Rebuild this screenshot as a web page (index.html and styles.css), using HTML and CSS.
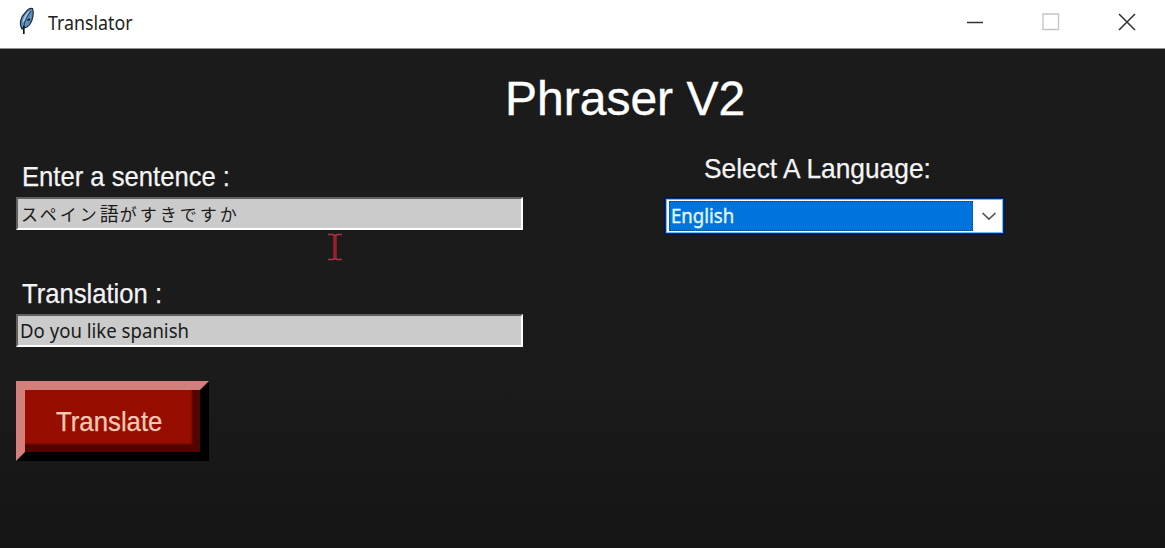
FILE: index.html
```
<!DOCTYPE html>
<html lang="en">
<head>
<meta charset="utf-8">
<title>Translator</title>
<link rel="stylesheet" href="styles.css">
</head>
<body>
<header class="titlebar">
  <svg class="feather" width="20" height="30" viewBox="0 0 20 30">
    <path d="M5 22C2 17 3.500 10 8 6C10 3 13 1 15.500 1.500C17 5 16 13 13 17C11 20 8 21 6 21Z" fill="#5f8fbe" stroke="#1b2a3c" stroke-width="1.200"/>
    <path d="M5.500 16C6 11 9 6 13 3.500C11 8 9 13 5.500 16Z" fill="#a3c8e8"/>
    <path d="M14 4C10 9 7.500 14 6.800 20" fill="none" stroke="#2b4763" stroke-width="1.200"/>
    <path d="M6.800 19V27M13 12L10.500 13.500" fill="none" stroke="#151515" stroke-width="1.700"/>
  </svg>
  <span class="window-name"><span class="fit fit-name">Translator</span></span>
  <div class="controls">
    <svg width="20" height="20" viewBox="0 0 20 20"><path d="M2 10.500H18" stroke="#333" stroke-width="1.500"/></svg>
    <svg width="20" height="20" viewBox="0 0 20 20"><path d="M2 2H17.500V17.500H2Z" fill="none" stroke="#c4c4c4" stroke-width="1.300"/></svg>
    <svg width="20" height="20" viewBox="0 0 20 20"><path d="M2 2L18 18M18 2L2 18" stroke="#333" stroke-width="1.600"/></svg>
  </div>
</header>
<main class="content">
  <h1 class="heading">Phraser V2</h1>
  <div class="columns">
    <section class="left">
      <label class="label"><span class="fit fit-sentence">Enter a sentence :</span></label>
      <div class="entry japanese">スペイン<span class="kanji">語</span>がすきですか</div>
      <label class="label second"><span class="fit fit-translation">Translation :</span></label>
      <div class="entry"><span class="fit fit-entry">Do you like spanish</span></div>
      <button class="translate"><span class="fit fit-button">Translate</span></button>
    </section>
    <section class="right">
      <label class="label language"><span class="fit fit-language">Select A Language:</span></label>
      <div class="combo">
        <div class="selected"><span class="fit fit-english">English</span></div>
        <div class="arrow"><svg width="16" height="12" viewBox="0 0 16 12"><path d="M1.500 3L8 9L14.500 3" fill="none" stroke="#555" stroke-width="1.700"/></svg></div>
      </div>
    </section>
  </div>
  <svg class="pointer" width="18" height="30" viewBox="0 0 18 30"><path d="M2 2.500H7L9 4L11 2.500H16M2 27.500H7L9 26L11 27.500H16" fill="none" stroke="#ab3540" stroke-width="1.700"/><path d="M9 4V26" stroke="#a01c2b" stroke-width="3.500"/></svg>
</main>
</body>
</html>
```
FILE: styles.css
```
* { box-sizing: border-box; }
body {
  margin: 0;
  width: 1165px;
  height: 548px;
  overflow: hidden;
  display: flex;
  flex-direction: column;
  font-family: "Liberation Sans", Arial, sans-serif;
}
.titlebar {
  height: 49px;
  flex: none;
  display: flex;
  align-items: flex-start;
  background: #fff;
  border-bottom: 1px solid #8b918e;
  padding: 7px 28px 0 17px;
}
.window-name {
  margin-left: 11px;
  font: 20px/32px "Noto Sans", sans-serif;
  color: #222;
}
.fit { display: inline-block; transform-origin: left center; white-space: nowrap; }
.fit-name { transform: scaleX(.89); }
.controls { margin-left: auto; display: flex; gap: 56px; padding-top: 5px; }
.controls svg { display: block; }
.content {
  position: relative;
  flex: 1;
  background: linear-gradient(#1b1b1b 0, #1b1b1b 65%, #151515 100%);
  padding: 22px 16px 0;
}
.heading {
  margin: 0 0 0 489px;
  font-size: 48px;
  line-height: 56px;
  font-weight: 400;
  color: #fff;
  white-space: nowrap;
  -webkit-text-stroke: .4px #fff;
}
.columns { display: flex; align-items: flex-start; }
.left { width: 507px; padding-top: 34px; display: flex; flex-direction: column; }
.right { width: 340px; margin-left: 143px; padding-top: 26px; }
.label {
  display: block;
  font-size: 28px;
  line-height: 32px;
  color: #f4f4f4;
  padding-left: 6px;
  -webkit-text-stroke: .25px #f4f4f4;
}
.fit-sentence { transform: scaleX(.915); }
.fit-translation { transform: scaleX(.915); }
.fit-language { transform: scaleX(.94); }
.fit-entry { transform: scaleX(.93); }
.fit-english { transform: scaleX(.93); }
.fit-button { transform: scaleX(.92); }
.entry {
  margin-top: 4px;
  height: 33px;
  background: #cbcbcb;
  border: 2px solid;
  border-color: #606060 #fff #fff #606060;
  padding-left: 2px;
  font: 20px/30px "Noto Sans", sans-serif;
  color: #1b1b1b;
  white-space: nowrap;
}
.japanese {
  font-family: "Noto Sans CJK JP", sans-serif;
  font-size: 17px;
  letter-spacing: 3px;
  padding-left: 3px;
}
.kanji { font-size: 19px; letter-spacing: 1px; line-height: 1; }
.second { margin-top: 48px; }
.language { padding-left: 38px; }
.combo {
  display: flex;
  height: 34px;
  width: 337px;
  margin-top: 14px;
  padding: 1px;
  border: 1px solid #6bbcf5;
  background: #fff;
  box-shadow: 0 0 0 1px #003080, 0 0 0 2px #001044;
}
.selected {
  width: 304px;
  margin-left: 1px;
  border: 1px dotted #143f69;
  background: #0074dc;
  font: 20px/28px "Noto Sans", sans-serif;
  color: #e0f5ff;
  padding-left: 1px;
  -webkit-text-stroke: .4px #e0f5ff;
}
.arrow { flex: 1; display: flex; align-items: center; justify-content: center; padding-left: 3px; }
.translate {
  width: 193px;
  height: 80px;
  margin-top: 34px;
  padding: 2px 0 0 31px;
  text-align: left;
  background: #970d00;
  border: 9px solid;
  border-color: #d37f7b #000 #000 #d37f7b;
  box-shadow: inset -8px -8px 2px #520500;
  font: 28px/32px "Liberation Sans", Arial, sans-serif;
  color: #f7c9b5;
  -webkit-text-stroke: .25px #f7c9b5;
}
.pointer { position: absolute; left: 326px; top: 183px; }
```
